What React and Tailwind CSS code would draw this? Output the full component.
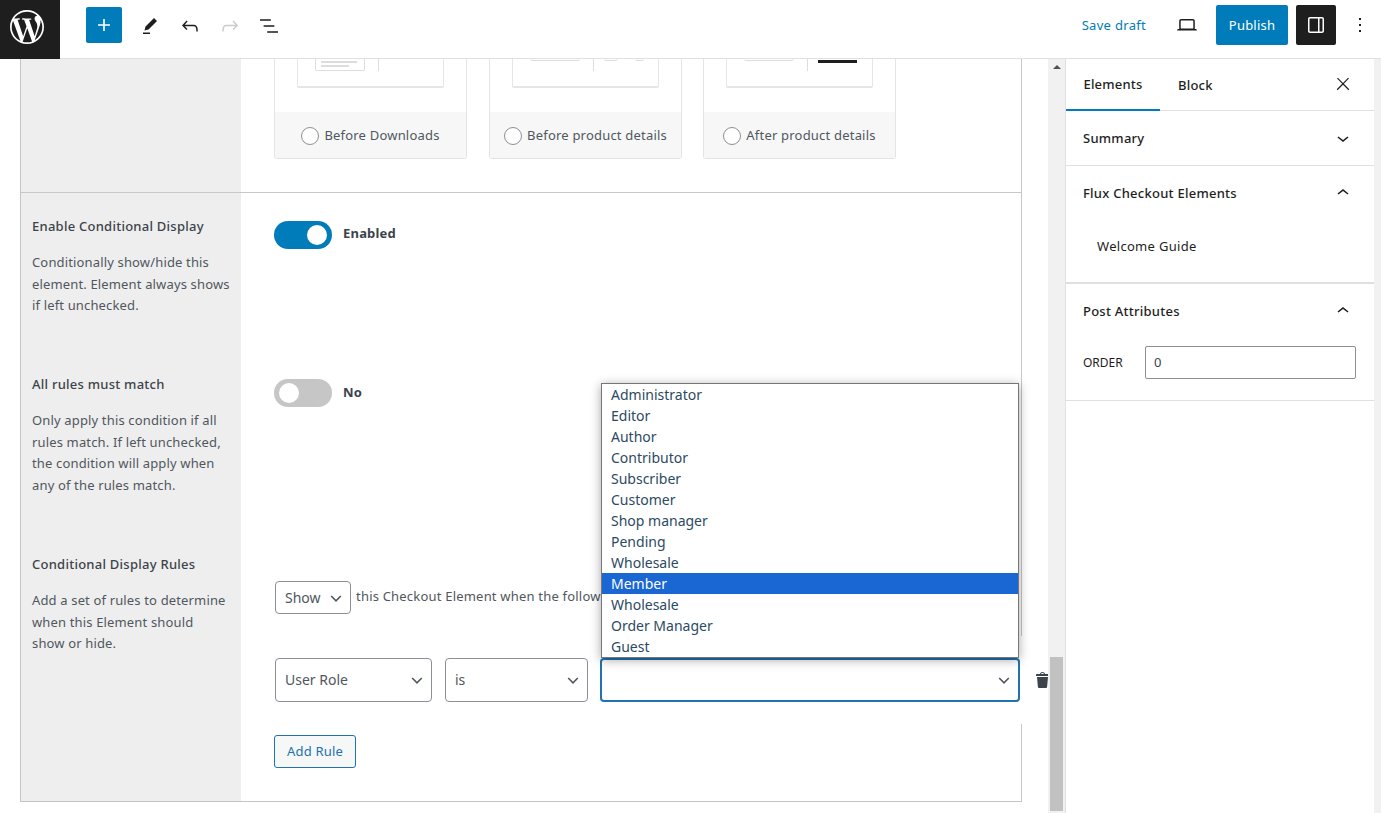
import { SiWordpress } from "react-icons/si";

const Icon = ({ d, size = 24, className = "" }) => (
    <svg viewBox="0 0 24 24" width={size} height={size} fill="currentColor" className={className}>
        <path d={d} />
    </svg>
);

const icons = {
    plus: "M18 11.2h-5.2V6h-1.6v5.2H6v1.6h5.2V18h1.6v-5.2H18z",
    pen: "m19 7-3-3-8.5 8.5-1 4 4-1L19 7Zm-7 11.5H5V20h7v-1.5Z",
    undo: "M18.3 11.7c-.6-.6-1.4-.9-2.3-.9H6.7l2.9-3.3-1.1-1-4.5 5L8.5 16l1-1-2.7-2.7H16c.5 0 .9.2 1.3.5 1 1 1 3.4 1 4.5v.3h1.5v-.2c0-1.5 0-4.3-1.5-5.7z",
    redo: "M15.6 6.5l-1.1 1 2.9 3.3H8c-.9 0-1.7.3-2.3.9-1.4 1.5-1.4 4.2-1.4 5.6v.2h1.5v-.3c0-1.1 0-3.5 1-4.5.3-.3.7-.5 1.3-.5h9.2L14.5 15l1.1 1.1 4.6-4.6-4.6-5z",
    list: "M13.8 5.2H3v1.5h10.8V5.2zm-3.6 12v1.5H21v-1.5H10.2zm7.2-6H6.6v1.5h10.8v-1.5z",
    laptop: "M20.5 16h-.7V8c0-1.1-.9-2-2-2H6.2c-1.1 0-2 .9-2 2v8h-.7c-.8 0-1.5.7-1.5 1.5h20c0-.8-.7-1.5-1.5-1.5zM5.7 8c0-.3.2-.5.5-.5h11.6c.3 0 .5.2.5.5v7.6H5.7V8z",
    sidebar: "M18 4H6c-1.1 0-2 .9-2 2v12c0 1.1.9 2 2 2h12c1.1 0 2-.9 2-2V6c0-1.1-.9-2-2-2zm-4 14.5H6c-.3 0-.5-.2-.5-.5V6c0-.3.2-.5.5-.5h8v13zm4.5-.5c0 .3-.2.5-.5.5h-2.5v-13H18c.3 0 .5.2.5.5v12z",
    dots: "M13 19h-2v-2h2v2zm0-6h-2v-2h2v2zm0-6h-2V5h2v2z",
    close: "M13 11.8l6.1-6.3-1-1-6.1 6.2-6.1-6.3-1 1 6.1 6.3-6.5 6.7 1 1 6.5-6.6 6.5 6.6 1-1z",
    down: "M17.5 11.6L12 16l-5.5-4.4.9-1.2L12 14l4.5-3.6 1 1.2z",
    up: "M6.5 12.4L12 8l5.5 4.4-.9 1.2L12 10l-4.5 3.6-1-1.2z",
};

const roles = ["Administrator", "Editor", "Author", "Contributor", "Subscriber", "Customer", "Shop manager", "Pending", "Wholesale", "Member", "Wholesale", "Order Manager", "Guest"];

const Caret = ({ className = "" }) => (
    <svg viewBox="0 0 20 20" width="16" height="16" className={className} fill="none" stroke="#50575e" strokeWidth="2">
        <path d="M4 7.5l6 6 6-6" />
    </svg>
);

const Select = ({ label, className = "" }) => (
    <div className={`flex items-center justify-between border border-[#8c8f94] rounded-[4px] bg-white pl-[9px] pr-[6px] text-[14px] text-[#50575e] ${className}`}>
        <span className="-mt-[1px]">{label}</span>
        <Caret />
    </div>
);

const Toggle = ({ on, label }) => (
    <div className="flex items-center gap-[11px]">
        <div className={`flex items-center w-[58px] h-[28px] rounded-full px-[5px] ${on ? "bg-[#007cba] justify-end" : "bg-[#c6c6c6] justify-start"}`}>
            <div className="w-[20px] h-[20px] rounded-full bg-white"></div>
        </div>
        <span className={`text-[13px] font-bold tracking-[0.2px] text-[#3c434a] ${on ? "-mt-[2px]" : ""}`}>{label}</span>
    </div>
);

const Option = ({ label, children, className = "" }) => (
    <div className={`flex flex-col w-[193px] h-[100px] border-x border-b border-[#e2e4e7] rounded-b-[3px] ${className}`}>
        <div className="h-[53px] px-[22px]">
            <div className="flex h-[29px] border-x border-b-2 border-[#e6e6e6] rounded-b-[2px] bg-white">
                {children}
            </div>
        </div>
        <div className="flex items-center justify-center gap-[5px] h-[46px] bg-[#f7f7f7] text-[13px] tracking-[0.2px] text-[#50575e] pt-[1px]">
            <div className="w-[18px] h-[18px] rounded-full border border-[#8c8f94] bg-white shrink-0"></div>
            <span className="whitespace-nowrap">{label}</span>
        </div>
    </div>
);

const Help = ({ title, children, className = "" }) => (
    <div className={`bg-[#eeeeee] pl-[11px] ${className}`}>
        <div className="text-[13px] font-medium tracking-[0.25px] text-[#3c434a] leading-[20px]">{title}</div>
        <p className="mt-[16px] text-[13px] tracking-[0.15px] leading-[21.5px] text-[#50575e] whitespace-nowrap">{children}</p>
    </div>
);

const SidePanel = ({ title, open, children, className = "" }) => (
    <div className={`border-b border-[#e0e0e0] ${className}`}>
        <div className="flex items-center justify-between h-[54px] pl-[17px] pr-[19px] text-[13px] font-medium tracking-[0.25px] text-[#1e1e1e]">
            <span className="mt-[1px]">{title}</span>
            <Icon d={open ? icons.up : icons.down} />
        </div>
        {children}
    </div>
);

export default function App() {
    return (
        <div className="flex flex-col w-[1381px] h-[813px] overflow-hidden bg-white font-['Noto_Sans',sans-serif]">
            {/* top bar */}
            <header className="flex items-start h-[59px] border-b border-[#e0e0e0] text-[#1e1e1e] shrink-0">
                <div className="flex items-center justify-center w-[60px] h-[59px] bg-[#1e1e1e] text-white pb-[6px] pr-[6px]">
                    <SiWordpress size={34} />
                </div>
                <button className="flex items-center justify-center mt-[7px] ml-[26px] w-[36px] h-[36px] rounded-[2px] bg-[#007cba] text-white">
                    <Icon d={icons.plus} />
                </button>
                <div className="flex items-center mt-[14px] ml-[16px] gap-[16px]">
                    <Icon d={icons.pen} />
                    <Icon d={icons.undo} />
                    <Icon d={icons.redo} className="text-[#cccccc]" />
                    <Icon d={icons.list} className="-ml-[1px]" />
                </div>
                <div className="flex items-center mt-[5px] ml-auto">
                    <span className="text-[13px] tracking-[0.3px] text-[#007cba] mt-[2px]">Save draft</span>
                    <Icon d={icons.laptop} className="ml-[29px]" />
                    <button className="w-[72px] h-[40px] ml-[17px] pt-[2px] rounded-[2px] bg-[#007cba] text-white text-[13px] tracking-[0.2px]">Publish</button>
                    <button className="flex items-center justify-center w-[40px] h-[40px] ml-[8px] rounded-[2px] bg-[#1e1e1e] text-white">
                        <Icon d={icons.sidebar} />
                    </button>
                    <Icon d={icons.dots} className="ml-[12px] mr-[9px]" />
                </div>
            </header>

            <div className="flex flex-1 min-h-0">
                {/* editor canvas */}
                <main className="w-[1048px] h-[754px] overflow-hidden pl-[20px] shrink-0">
                    <div className="w-[1002px] border-l border-b border-[#c3c4c7] h-[743px] box-border">
                        <div className="flex h-[134px] border-b border-r border-[#c8c8c8]">
                            <div className="w-[220px] bg-[#eeeeee] shrink-0"></div>
                            <div className="flex pl-[33px]">
                                <Option label="Before Downloads">
                                    <div className="ml-[17px] w-[50px] h-[12px] border border-t-0 border-[#dddddd] rounded-b-[2px] px-[5px] pt-[2px]">
                                        <div className="w-[36px] h-[2px] bg-[#dddddd] mb-[2px]"></div>
                                        <div className="w-[28px] h-[2px] bg-[#dddddd]"></div>
                                    </div>
                                    <div className="ml-[13px] w-px h-[12px] bg-[#dddddd]"></div>
                                </Option>
                                <Option label="Before product details" className="ml-[22px]">
                                    <div className="ml-[17px] w-[50px] h-[2px] border-b border-[#dddddd] rounded-b-[2px]"></div>
                                    <div className="ml-[13px] w-px h-[12px] bg-[#dddddd]"></div>
                                    <div className="ml-[10px] w-[14px] h-[2px] border-b border-[#dddddd] rounded-b-full"></div>
                                    <div className="ml-[17px] w-[9px] h-[2px] border-b border-[#dddddd] rounded-b-full"></div>
                                </Option>
                                <Option label="After product details" className="ml-[21px]">
                                    <div className="ml-[17px] w-[50px] h-[2px] border-b border-[#dddddd] rounded-b-[2px]"></div>
                                    <div className="ml-[13px] w-px h-[12px] bg-[#dddddd]"></div>
                                    <div className="ml-[10px] mt-[1px] w-[39px] h-[3px] bg-[#1e1e1e]"></div>
                                </Option>
                            </div>
                        </div>

                        <div className="flex h-[158px] border-r border-[#c8c8c8]">
                            <Help title="Enable Conditional Display" className="w-[220px] pt-[23px] shrink-0">
                                Conditionally show/hide this<br />element. Element always shows<br />if left unchecked.
                            </Help>
                            <div className="pl-[33px] pt-[28px]">
                                <Toggle on label="Enabled" />
                            </div>
                        </div>

                        <div className="flex h-[180px] border-r border-[#c8c8c8]">
                            <Help title="All rules must match" className="w-[220px] pt-[23px] shrink-0">
                                Only apply this condition if all<br />rules match. If left unchecked,<br />the condition will apply when<br />any of the rules match.
                            </Help>
                            <div className="pl-[33px] pt-[28px]">
                                <Toggle label="No" />
                            </div>
                        </div>

                        <div className="flex h-[270px]">
                            <Help title="Conditional Display Rules" className="w-[220px] pt-[23px] shrink-0">
                                Add a set of rules to determine<br />when this Element should<br />show or hide.
                            </Help>
                            <div className="flex-1 min-w-0">
                                <div className="h-[105px] pl-[34px] pt-[50px] border-r border-[#c8c8c8]">
                                    <div className="flex items-center gap-[5px] whitespace-nowrap text-[13px] tracking-[0.2px] text-[#50575e]">
                                        <Select label="Show" className="w-[76px] h-[33px] shrink-0 tracking-normal" />
                                        <span className="-mt-[2px]">this Checkout Element when the follow</span>
                                    </div>
                                </div>
                                {/* this row runs past the panel's right edge up to the scrollbar */}
                                <div className="flex items-center gap-[13px] w-[807px] h-[88px] pl-[34px] bg-white">
                                    <Select label="User Role" className="w-[157px] h-[44px] shrink-0" />
                                    <Select label="is" className="w-[143px] h-[44px] shrink-0" />
                                    <div className="relative shrink-0 -ml-px">
                                        <div className="flex items-center justify-end w-[420px] h-[44px] border-2 border-[#2271b1] rounded-[4px] bg-white pr-[6px]">
                                            <Caret />
                                        </div>
                                        <ul className="absolute left-[1px] bottom-[44px] w-[418px] border border-[#767676] bg-white text-[14px] leading-[21px] text-[#2c4a63] shadow-[0_2px_10px_rgba(0,0,0,0.35)]">
                                            {roles.map((role, i) => (
                                                <li key={i} className={`h-[21px] pl-[9px] ${role === "Member" ? "bg-[#1a66d2] text-white" : ""}`}>{role}</li>
                                            ))}
                                        </ul>
                                    </div>
                                    <svg viewBox="0 0 20 20" width="20" height="20" fill="#3c434a" className="shrink-0">
                                        <path d="M12 4h3c.6 0 1 .4 1 1v1H3V5c0-.6.5-1 1-1h3c.2-1.1 1.3-2 2.5-2s2.3.9 2.5 2zM8 4h3c-.2-.6-.9-1-1.5-1S8.2 3.4 8 4zM4 7h11l-.9 10.1c0 .5-.5.9-1 .9H5.9c-.5 0-.9-.4-1-.9L4 7z" />
                                    </svg>
                                </div>
                                <div className="h-[77px] pl-[33px] pt-[11px] border-r border-[#c8c8c8]">
                                    <button className="w-[82px] h-[33px] border border-[#2271b1] rounded-[3px] bg-[#f6f7f7] text-[13px] tracking-[0.2px] text-[#2271b1]">Add Rule</button>
                                </div>
                            </div>
                        </div>
                    </div>
                </main>

                {/* canvas scrollbar */}
                <div className="flex flex-col justify-between w-[17px] h-[754px] bg-[#f1f1f1] shrink-0 px-[2px] pb-[2px]">
                    <div className="mx-auto mt-[6px] w-0 h-0 border-x-[4px] border-x-transparent border-b-[4px] border-b-[#505050]"></div>
                    <div className="w-[13px] h-[154px] bg-[#c1c1c1]"></div>
                </div>

                {/* settings sidebar */}
                <aside className="w-[309px] border-l border-[#e0e0e0] shrink-0 text-[#1e1e1e]">
                    <div className="flex items-center h-[52px] border-b border-[#e0e0e0] text-[13px] font-medium tracking-[0.2px]">
                        <div className="flex items-center justify-center w-[94px] h-[52px] border-b-2 border-[#007cba] -mb-px pt-[2px]">Elements</div>
                        <div className="ml-[18px] pt-[2px]">Block</div>
                        <Icon d={icons.close} size={20} className="ml-auto mr-[21px] -mt-[1px]" />
                    </div>
                    <SidePanel title="Summary" />
                    <SidePanel title="Flux Checkout Elements" open className="border-b-2 h-[118px]">
                        <div className="pl-[31px] pt-[17px] text-[13px] tracking-[0.3px] text-[#1e1e1e]">Welcome Guide</div>
                    </SidePanel>
                    <SidePanel title="Post Attributes" open className="h-[117px]">
                        <div className="flex items-center pl-[17px] pr-[18px] pt-[8px]">
                            <span className="w-[62px] text-[12px]">ORDER</span>
                            <div className="flex-1 flex items-center h-[33px] border border-[#8c8f94] rounded-[2px] pl-[8px] pt-[1px] text-[13px] text-[#3c434a]">0</div>
                        </div>
                    </SidePanel>
                </aside>

                {/* sidebar scrollbar, cut off by the window */}
                <div className="flex-1 bg-[#f1f1f1]"></div>
            </div>
        </div>
    );
}
